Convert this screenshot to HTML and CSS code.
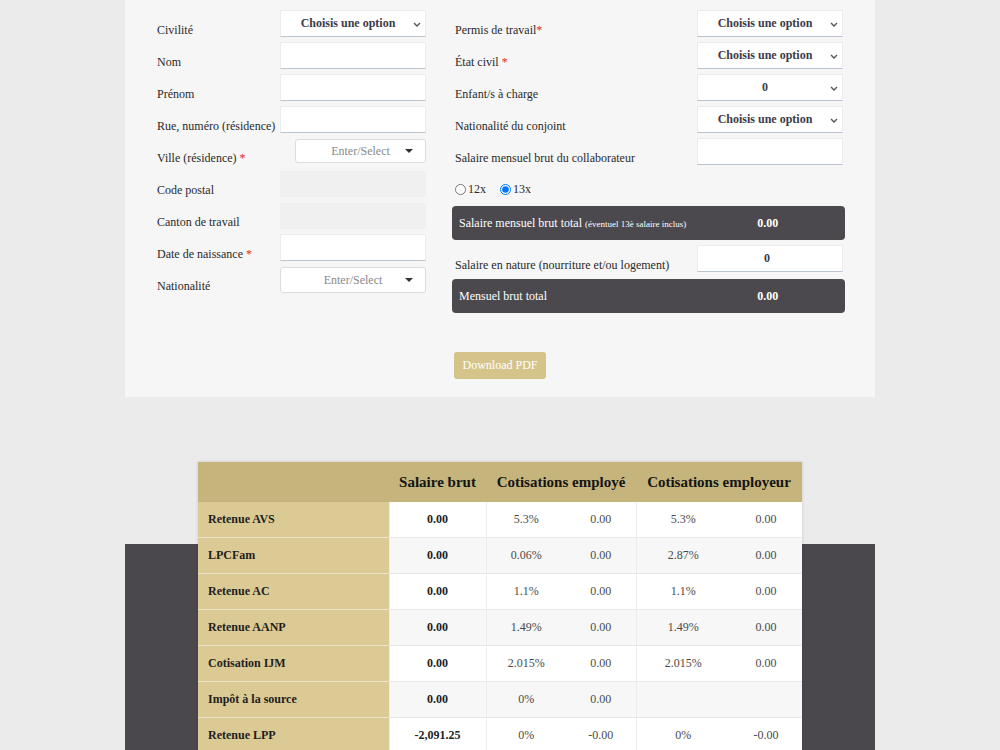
FILE: index.html
```html
<!DOCTYPE html>
<html lang="fr">
<head>
<meta charset="utf-8">
<title>Calculateur de salaire</title>
<link rel="stylesheet" href="styles.css">
</head>
<body>
<div class="panel">
  <div class="form-grid">
    <div class="col col-left">
      <div class="field">
        <label>Civilité</label>
        <div class="control select"><span>Choisis une option</span><svg class="chev" width="8" height="5" viewBox="0 0 8 5"><path d="M1 1l3 3 3-3" fill="none" stroke="#555" stroke-width="1.4"/></svg></div>
      </div>
      <div class="field"><label>Nom</label><div class="control"></div></div>
      <div class="field"><label>Prénom</label><div class="control"></div></div>
      <div class="field"><label>Rue, numéro (résidence)</label><div class="control"></div></div>
      <div class="field">
        <label>Ville (résidence) <span class="req">*</span></label>
        <div class="combo combo-short"><span>Enter/Select</span><svg class="caret" width="8" height="4" viewBox="0 0 8 4"><path d="M0 0h8L4 4z" fill="#333"/></svg></div>
      </div>
      <div class="field"><label>Code postal</label><div class="control readonly"></div></div>
      <div class="field"><label>Canton de travail</label><div class="control readonly"></div></div>
      <div class="field"><label>Date de naissance <span class="req">*</span></label><div class="control"></div></div>
      <div class="field">
        <label>Nationalité</label>
        <div class="combo"><span>Enter/Select</span><svg class="caret" width="8" height="4" viewBox="0 0 8 4"><path d="M0 0h8L4 4z" fill="#333"/></svg></div>
      </div>
    </div>

    <div class="col col-right">
      <div class="field">
        <label>Permis de travail<span class="req">*</span></label>
        <div class="control select"><span>Choisis une option</span><svg class="chev" width="8" height="5" viewBox="0 0 8 5"><path d="M1 1l3 3 3-3" fill="none" stroke="#555" stroke-width="1.4"/></svg></div>
      </div>
      <div class="field">
        <label>État civil <span class="req">*</span></label>
        <div class="control select"><span>Choisis une option</span><svg class="chev" width="8" height="5" viewBox="0 0 8 5"><path d="M1 1l3 3 3-3" fill="none" stroke="#555" stroke-width="1.4"/></svg></div>
      </div>
      <div class="field">
        <label>Enfant/s à charge</label>
        <div class="control select"><span>0</span><svg class="chev" width="8" height="5" viewBox="0 0 8 5"><path d="M1 1l3 3 3-3" fill="none" stroke="#555" stroke-width="1.4"/></svg></div>
      </div>
      <div class="field">
        <label>Nationalité du conjoint</label>
        <div class="control select"><span>Choisis une option</span><svg class="chev" width="8" height="5" viewBox="0 0 8 5"><path d="M1 1l3 3 3-3" fill="none" stroke="#555" stroke-width="1.4"/></svg></div>
      </div>
      <div class="field">
        <label>Salaire mensuel brut du collaborateur</label>
        <div class="control"></div>
      </div>

      <div class="radios">
        <label class="radio"><input type="radio" name="months">12x</label>
        <label class="radio"><input type="radio" name="months" checked>13x</label>
      </div>

      <div class="total">
        <div class="total-label">Salaire mensuel brut total <small>(éventuel 13è salaire inclus)</small></div>
        <div class="total-value">0.00</div>
      </div>

      <div class="field field-nature">
        <label>Salaire en nature (nourriture et/ou logement)</label>
        <div class="control value">0</div>
      </div>

      <div class="total">
        <div class="total-label">Mensuel brut total</div>
        <div class="total-value">0.00</div>
      </div>

      <button class="btn-pdf" type="button">Download PDF</button>
    </div>
  </div>
</div>

<section class="results">
  <table class="breakdown">
    <colgroup>
      <col class="c-label"><col class="c-brut"><col class="c-ep"><col class="c-ev"><col class="c-rp"><col class="c-rv">
    </colgroup>
    <thead>
      <tr><th></th><th>Salaire brut</th><th colspan="2">Cotisations employé</th><th colspan="2">Cotisations employeur</th></tr>
    </thead>
    <tbody>
      <tr><td class="name">Retenue AVS</td><td class="brut">0.00</td><td>5.3%</td><td>0.00</td><td>5.3%</td><td>0.00</td></tr>
      <tr><td class="name">LPCFam</td><td class="brut">0.00</td><td>0.06%</td><td>0.00</td><td>2.87%</td><td>0.00</td></tr>
      <tr><td class="name">Retenue AC</td><td class="brut">0.00</td><td>1.1%</td><td>0.00</td><td>1.1%</td><td>0.00</td></tr>
      <tr><td class="name">Retenue AANP</td><td class="brut">0.00</td><td>1.49%</td><td>0.00</td><td>1.49%</td><td>0.00</td></tr>
      <tr><td class="name">Cotisation IJM</td><td class="brut">0.00</td><td>2.015%</td><td>0.00</td><td>2.015%</td><td>0.00</td></tr>
      <tr><td class="name">Impôt à la source</td><td class="brut">0.00</td><td>0%</td><td>0.00</td><td></td><td></td></tr>
      <tr><td class="name">Retenue LPP</td><td class="brut">-2,091.25</td><td>0%</td><td>-0.00</td><td>0%</td><td>-0.00</td></tr>
    </tbody>
  </table>
</section>
</body>
</html>
```

FILE: styles.css
```css
body {
  margin: 0;
  background: #ebebeb;
  font-family: "Liberation Serif", Tinos, "Times New Roman", "DejaVu Serif", serif;
  font-size: 12px;
  color: #2a2a2a;
}

/* ---- form panel ---- */
.panel {
  width: 750px;
  margin: 0 auto;
  box-sizing: border-box;
  padding: 10px 30px 18px 32px;
  background: #f6f6f6;
}

.form-grid {
  display: grid;
  grid-template-columns: 269px 393px;
  column-gap: 26px;
  align-items: start;
}

.field {
  display: flex;
  align-items: flex-end;
  height: 27px;
  margin-bottom: 5px;
}

.field label {
  flex: none;
  line-height: 14px;
}

.col-left .field label { width: 123px; }
.col-right .field label { width: 242px; padding-left: 3px; }

.req { color: #e3242b; }

.control {
  position: relative;
  flex: none;
  align-self: stretch;
  width: 146px;
  box-sizing: border-box;
  background: #fff;
  border: 1px solid #ececec;
  border-bottom-color: #bcc5cf;
}

.control.readonly {
  background: #f0f0f0;
  border-color: #f0f0f0;
  margin-top: 1px;
}

.control.select,
.control.value {
  display: flex;
  align-items: center;
  justify-content: center;
  padding-right: 10px;
  font-weight: bold;
  color: #3c3b48;
}

.control.value { padding-right: 6px; }

.chev {
  position: absolute;
  right: 4px;
  top: 11px;
}

/* searchable dropdowns */
.combo {
  position: relative;
  flex: none;
  align-self: flex-start;
  width: 146px;
  height: 26px;
  margin-top: 1px;
  box-sizing: border-box;
  display: flex;
  align-items: center;
  justify-content: center;
  background: #fff;
  border: 1px solid #dcdcdc;
  border-radius: 3px;
  color: #8a8a8a;
}

.combo-short {
  width: 131px;
  height: 24px;
  margin-left: 15px;
}

.caret {
  position: absolute;
  right: 12px;
  top: 50%;
  margin-top: -2px;
}

.col-right .control { margin-right: 2px; }

.radios {
  display: flex;
  align-items: center;
  height: 26px;
  padding-top: 6px;
  margin-bottom: 4px;
  font-size: 12px;
}

.radio {
  display: flex;
  align-items: center;
  margin-right: 11px;
}

.radio input {
  margin: 0 2px 0 3px;
  width: 11px;
  height: 11px;
}

.total {
  display: flex;
  align-items: center;
  height: 34px;
  background: #4b494e;
  color: #fff;
  border-radius: 4px;
}

.total-label {
  width: 60%;
  padding-left: 7px;
}

.total-label small { font-size: 9px; }

.total-value {
  width: 40%;
  text-align: center;
  font-weight: bold;
}

.field-nature { margin-top: 5px; margin-bottom: 7px; }

.btn-pdf {
  display: block;
  margin: 39px 0 0 2px;
  width: 92px;
  height: 27px;
  padding: 0;
  border: none;
  border-radius: 3px;
  background: #d5c48a;
  color: #fff;
  font-family: inherit;
  font-size: 12px;
}

/* ---- breakdown table ---- */
.results {
  width: 750px;
  margin: 65px auto 0;
  padding-bottom: 40px;
  background: linear-gradient(to bottom, transparent 82px, #4a484d 82px);
}

.breakdown {
  width: 604px;
  margin: 0 auto;
  border-collapse: collapse;
  table-layout: fixed;
  background: #fff;
  box-shadow: 0 0 3px rgba(0, 0, 0, 0.15);
}

.c-label { width: 191px; }
.c-brut { width: 97px; }
.c-ep { width: 80px; }
.c-ev { width: 70px; }
.c-rp { width: 94px; }
.c-rv { width: 72px; }

.breakdown th {
  height: 40px;
  padding: 0;
  background: #c5b47b;
  font-size: 15px;
  font-weight: bold;
  color: #141414;
}

.breakdown td {
  height: 35px;
  padding: 0;
  text-align: center;
  color: #4a4a4a;
  border-bottom: 1px solid #e8e8e8;
}

.breakdown tbody tr:nth-child(even) td { background: #f7f7f7; }

.breakdown td:nth-child(2),
.breakdown td:nth-child(3),
.breakdown td:nth-child(5) { border-left: 1px solid #ececec; }

.breakdown td.name {
  text-align: left;
  padding-left: 10px;
  background: #dbca93;
  font-weight: bold;
  color: #1f1f1f;
  border-bottom-color: #ebe4cd;
}

.breakdown tbody tr:nth-child(even) td.name { background: #dbca93; }

.breakdown td.brut {
  font-weight: bold;
  color: #222;
}
```
